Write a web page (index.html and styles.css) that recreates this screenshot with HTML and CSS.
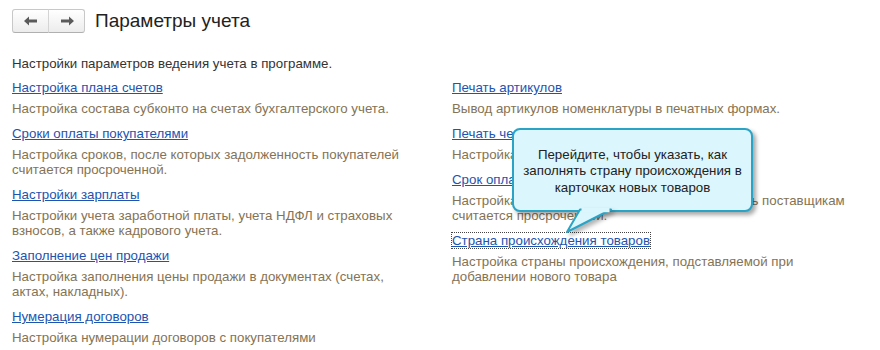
FILE: index.html
```html
<!DOCTYPE html>
<html lang="ru">
<head>
    <meta charset="UTF-8">
    <title>Параметры учета</title>
    <link rel="stylesheet" href="styles.css">
</head>
<body>

    <div class="header">
        <div class="nav">
            <button class="nav-btn" type="button">
                <svg width="14" height="10" viewBox="0 0 14 10"><path d="M0 5 L5 0.5 V3.5 H13 V6.5 H5 V9.5 Z" fill="#5a5a5a"/></svg>
            </button>
            <button class="nav-btn" type="button">
                <svg width="14" height="10" viewBox="0 0 14 10"><path d="M14 5 L9 0.5 V3.5 H1 V6.5 H9 V9.5 Z" fill="#5a5a5a"/></svg>
            </button>
        </div>
        <h1>Параметры учета</h1>
    </div>

    <p class="intro">Настройки параметров ведения учета в программе.</p>

    <div class="columns">
        <div class="col">
            <div class="item">
                <a href="#">Настройка плана счетов</a>
                <p>Настройка состава субконто на счетах бухгалтерского учета.</p>
            </div>
            <div class="item">
                <a href="#">Сроки оплаты покупателями</a>
                <p>Настройка сроков, после которых задолженность покупателей считается просроченной.</p>
            </div>
            <div class="item">
                <a href="#">Настройки зарплаты</a>
                <p>Настройки учета заработной платы, учета НДФЛ и страховых взносов, а также кадрового учета.</p>
            </div>
            <div class="item">
                <a href="#">Заполнение цен продажи</a>
                <p>Настройка заполнения цены продажи в документах (счетах, актах, накладных).</p>
            </div>
            <div class="item">
                <a href="#">Нумерация договоров</a>
                <p>Настройка нумерации договоров с покупателями</p>
            </div>
        </div>

        <div class="col">
            <div class="item">
                <a href="#">Печать артикулов</a>
                <p>Вывод артикулов номенклатуры в печатных формах.</p>
            </div>
            <div class="item">
                <a href="#">Печать чеков</a>
                <p>Настройка печати чеков.</p>
            </div>
            <div class="item">
                <a href="#">Срок оплаты поставщикам</a>
                <p>Настройка сроков, после которых задолженность поставщикам считается просроченной.</p>
            </div>
            <div class="item">
                <a href="#" class="focused">Страна происхождения товаров</a>
                <p>Настройка страны происхождения, подставляемой при добавлении нового товара</p>
            </div>
        </div>
    </div>

    <!-- tooltip over the link -->
    <div class="hint">
        Перейдите, чтобы указать, как заполнять страну происхождения в карточках новых товаров
        <svg class="hint-tail" width="50" height="26" viewBox="0 0 50 26">
            <polygon points="16,1.5 3,24 47,1.5" fill="#dbf6fc" stroke="#2ba3c4" stroke-width="2" stroke-linejoin="round"/>
            <rect x="17.5" y="0" width="28" height="4.2" fill="#dbf6fc"/>
        </svg>
    </div>

</body>
</html>
```

FILE: styles.css
```css
body { margin: 0; padding: 0 12px; font-family: Arial, "Liberation Sans", sans-serif; font-size: 13.3px; color: #333; background: #fff; }

.header { display: flex; align-items: center; gap: 10px; margin-top: 9px; height: 24px; }
.nav { display: flex; }
.nav-btn { width: 37px; height: 24px; padding: 0; display: flex; align-items: center; justify-content: center; border: 1px solid #c8c8c8; border-bottom-color: #b0b0b0; background: linear-gradient(#ffffff, #ececec); cursor: pointer; }
.nav-btn:first-child { border-radius: 3px 0 0 3px; }
.nav-btn:last-child { border-radius: 0 3px 3px 0; border-left: 1px solid #d4d4d4; margin-left: -1px; }
h1 { margin: 0; font-size: 19px; font-weight: normal; color: #222; line-height: 24px; }

.intro { margin: 23px 0 9px; line-height: 15px; color: #333; }

.columns { display: grid; grid-template-columns: 400px 400px; column-gap: 40px; }
.item { margin-bottom: 10px; }
.item a { display: inline-block; color: #1d54b0; text-decoration: underline; line-height: 15px; }
.item p { margin: 6px 0 0; line-height: 15px; color: #857354; }
.item a.focused { outline: 1px dotted #444; outline-offset: 0; }

.hint { position: absolute; left: 512px; top: 128px; width: 241px; height: 84px; box-sizing: border-box; padding: 3px 8px 0; display: flex; align-items: center; justify-content: center; text-align: center; line-height: 16.5px; color: #222; background: #dbf6fc; border: 2px solid #2ba3c4; border-radius: 8px; box-shadow: 3px 3px 4px rgba(0, 0, 0, 0.35); }
.hint-tail { position: absolute; left: 50px; top: calc(100% - 2px); overflow: visible; filter: drop-shadow(3px 3px 2px rgba(0, 0, 0, 0.3)); }
```
